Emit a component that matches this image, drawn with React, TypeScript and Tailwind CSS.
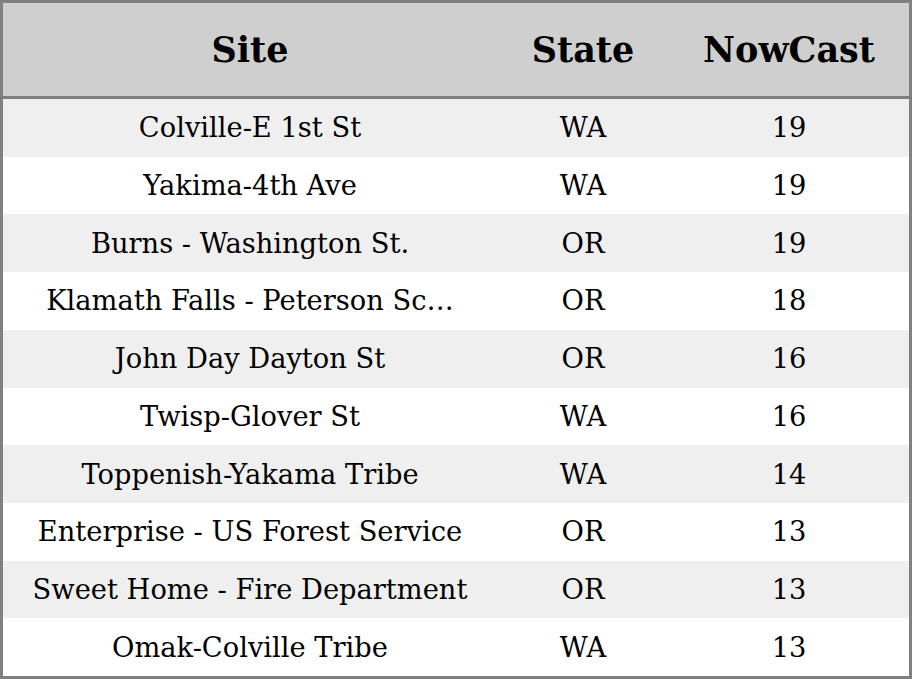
const ROWS = [
  { site: "Colville-E 1st St", state: "WA", nowcast: 19 },
  { site: "Yakima-4th Ave", state: "WA", nowcast: 19 },
  { site: "Burns - Washington St.", state: "OR", nowcast: 19 },
  { site: "Klamath Falls - Peterson Sc…", state: "OR", nowcast: 18 },
  { site: "John Day Dayton St", state: "OR", nowcast: 16 },
  { site: "Twisp-Glover St", state: "WA", nowcast: 16 },
  { site: "Toppenish-Yakama Tribe", state: "WA", nowcast: 14 },
  { site: "Enterprise - US Forest Service", state: "OR", nowcast: 13 },
  { site: "Sweet Home - Fire Department", state: "OR", nowcast: 13 },
  { site: "Omak-Colville Tribe", state: "WA", nowcast: 13 },
]

export default function App() {
  return (
    <div
      className="flex flex-col w-[912px] h-[679px] border-[3px] border-[#808080] bg-white text-black"
      style={{ fontFamily: '"DejaVu Serif", serif' }}
    >
      {/* header */}
      <div className="grid grid-cols-[494px_172px_1fr] h-[96px] shrink-0 pt-[2px] bg-[#cfcfcf] border-b-[3px] border-[#808080] text-[35px] font-bold">
        <div className="flex items-center justify-center">Site</div>
        <div className="flex items-center justify-center">State</div>
        <div className="flex items-center justify-center">NowCast</div>
      </div>

      {ROWS.map((r, i) => (
        <div
          key={i}
          className={`grid grid-cols-[494px_172px_1fr] flex-1 pt-[2px] text-[27.3px] ${i % 2 === 0 ? "bg-[#efefef]" : "bg-white"}`}
        >
          <div className="flex items-center justify-center whitespace-nowrap">{r.site}</div>
          <div className="flex items-center justify-center">{r.state}</div>
          <div className="flex items-center justify-center">{r.nowcast}</div>
        </div>
      ))}
    </div>
  )
}
